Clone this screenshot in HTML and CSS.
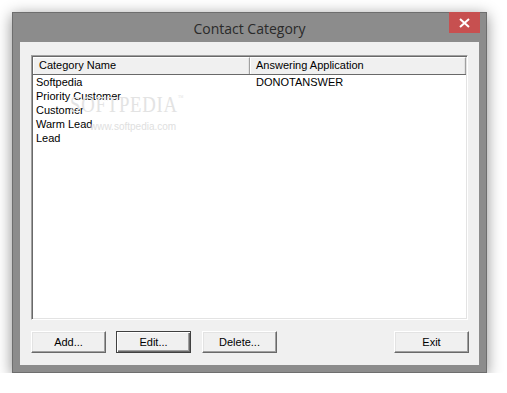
FILE: index.html
```html
<!DOCTYPE html>
<html lang="en">
<head>
  <meta charset="UTF-8" />
  <title>Contact Category</title>
  <link rel="stylesheet" href="styles.css">
</head>
<body>
  <div class="window">
    <div class="titlebar">
      <span class="title">Contact Category</span>
      <button class="close" aria-label="Close">
        <svg width="11" height="10" viewBox="0 0 11 10">
          <path d="M1 1 L10 9 M10 1 L1 9" stroke="#fff" stroke-width="2" fill="none"/>
        </svg>
      </button>
    </div>
    <div class="client">
      <div class="listview">
        <div class="list-header">
          <div class="col-head first">Category Name</div>
          <div class="col-head">Answering Application</div>
        </div>
        <div class="rows">
          <div class="row"><span class="cell first">Softpedia</span><span class="cell">DONOTANSWER</span></div>
          <div class="row"><span class="cell first">Priority Customer</span><span class="cell"></span></div>
          <div class="row"><span class="cell first">Customer</span><span class="cell"></span></div>
          <div class="row"><span class="cell first">Warm Lead</span><span class="cell"></span></div>
          <div class="row"><span class="cell first">Lead</span><span class="cell"></span></div>
        </div>
        <div class="watermark">
          <span class="wm-big">SOFTPEDIA<sup>™</sup></span>
          <span class="wm-small">www.softpedia.com</span>
        </div>
      </div>
      <div class="buttons">
        <button class="btn">Add...</button>
        <button class="btn default">Edit...</button>
        <button class="btn">Delete...</button>
        <button class="btn exit">Exit</button>
      </div>
    </div>
  </div>
</body>
</html>
```

FILE: styles.css
```css
* {
  box-sizing: border-box; margin: 0; padding: 0;
}

body {
  background: #fff;
  font-family: "Liberation Sans", Arial, sans-serif;
  font-size: 11px;
  color: #000;
}

.window {
  margin: 12px 0 0 12px;
  width: 475px;
  height: 361px;
  background: #8c8c8c;
  border: 1px solid #6e6e6e;
  box-shadow: 0 3px 14px rgba(0, 0, 0, 0.45);
  padding: 0 7px 7px;
  display: flex;
  flex-direction: column;
}

.titlebar {
  height: 29px;
  display: grid;
  grid-template-columns: 1fr auto 1fr;
  align-items: center;
}

.title {
  grid-column: 2;
  font-family: "Open Sans", "Noto Sans", sans-serif;
  font-size: 14px;
  color: #2a2a2a;
  padding-top: 1px;
}

.close {
  grid-column: 3;
  justify-self: end;
  align-self: start;
  margin: -1px -1px 0 0;
  width: 31px;
  height: 21px;
  background: #c75050;
  border: none;
  display: flex;
  align-items: center;
  justify-content: center;
}

.client {
  flex: 1;
  background: #f0f0f0;
  padding: 13px 11px 12px;
  display: flex;
  flex-direction: column;
}

.listview {
  flex: 1;
  position: relative;
  background: #fff;
  border-top: 1px solid #a0a0a0;
  border-left: 1px solid #a0a0a0;
  border-right: 1px solid #fff;
  border-bottom: 1px solid #fff;
  box-shadow: inset 1px 1px 0 #696969, inset -1px -1px 0 #e3e3e3;
  padding: 1px;
  overflow: hidden;
}

.list-header {
  display: flex;
  height: 18px;
  background: #f0f0f0;
  border-bottom: 1px solid #696969;
}

.col-head {
  flex: 1;
  line-height: 15px;
  padding-left: 5px;
  border-top: 1px solid #fff;
  border-left: 1px solid #fff;
  border-right: 1px solid #a0a0a0;
  box-shadow: inset -1px 0 0 #e3e3e3;
}

.col-head.first {
  flex: 0 0 217px;
}

.row {
  display: flex;
  height: 14px;
  line-height: 14px;
}

.cell {
  flex: 1;
  padding-left: 6px;
}

.cell.first {
  flex: 0 0 217px;
  padding-left: 3px;
}

.watermark {
  position: absolute;
  left: 38px;
  top: 30px;
  color: #e3e3e3;
  pointer-events: none;
}

.wm-big {
  display: block;
  font-family: "Liberation Serif", serif;
  font-size: 24px;
  line-height: 24px;
  letter-spacing: 1px;
  transform: scaleX(0.78);
  transform-origin: left center;
}

.wm-big sup {
  font-size: 7px;
  vertical-align: 12px;
}

.wm-small {
  display: block;
  margin: 5px 0 0 20px;
  font-size: 10px;
  color: #e0e0e0;
}

.buttons {
  margin-top: 11px;
  display: flex;
  height: 22px;
}

.btn {
  width: 75px;
  height: 22px;
  font-family: "Liberation Sans", Arial, sans-serif;
  font-size: 11px;
  color: #000;
  background: #f0f0f0;
  border-top: 1px solid #fff;
  border-left: 1px solid #fff;
  border-right: 1px solid #696969;
  border-bottom: 1px solid #696969;
  box-shadow: inset -1px -1px 0 #a0a0a0, inset 1px 1px 0 #e3e3e3;
  margin-right: 10px;
}

.btn.default {
  border: 1px solid #404040;
  box-shadow: inset 1px 1px 0 #fff, inset -1px -1px 0 #696969, inset -2px -2px 0 #a0a0a0;
  margin-right: 11px;
}

.btn.exit {
  margin-left: auto;
  margin-right: -1px;
}
```
